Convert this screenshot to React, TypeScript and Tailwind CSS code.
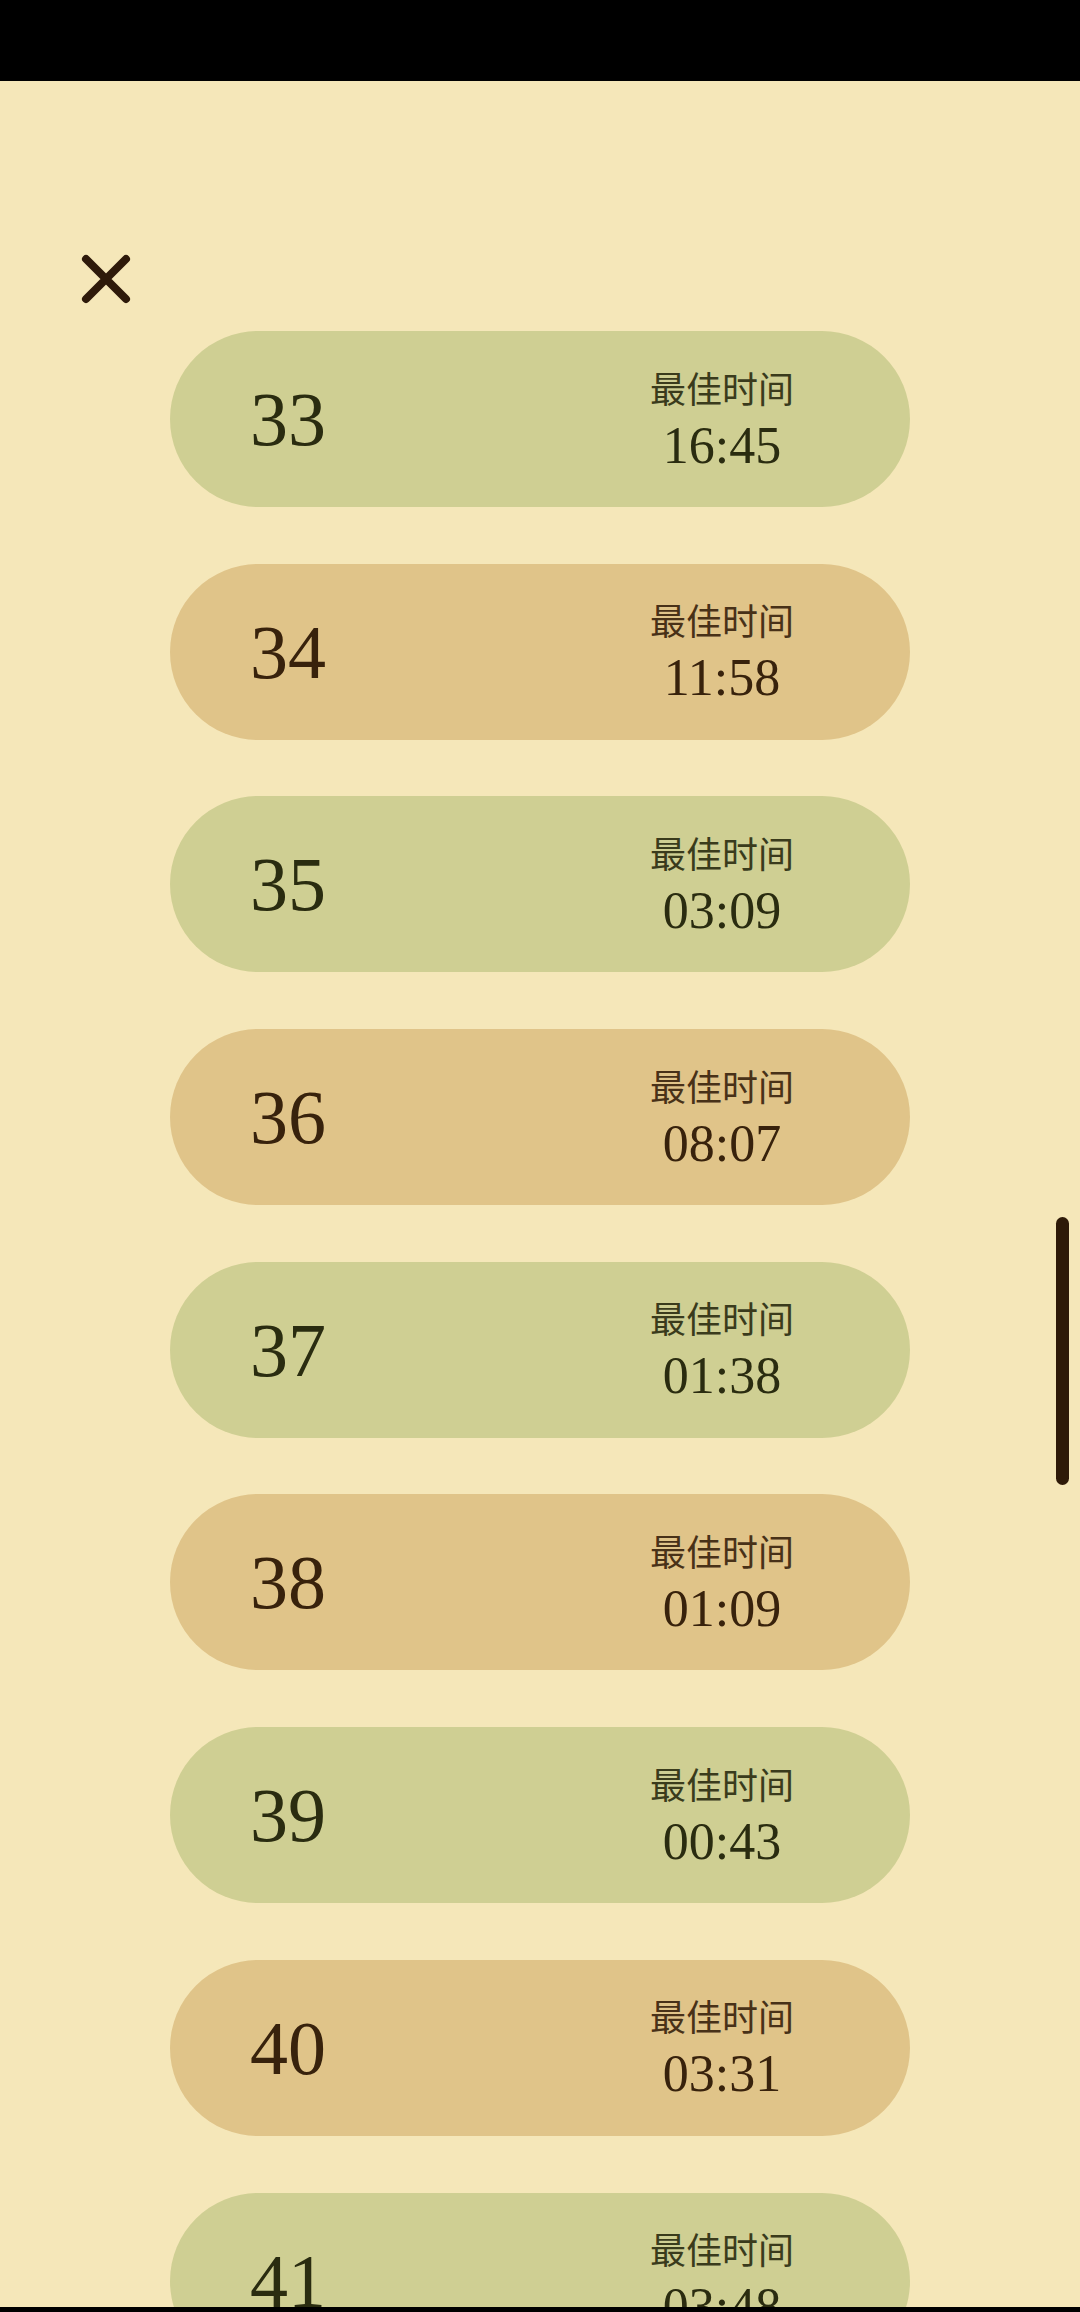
import React from "react";

type Level = { id: number; best: string };

const levels: Level[] = [
  { id: 33, best: "16:45" },
  { id: 34, best: "11:58" },
  { id: 35, best: "03:09" },
  { id: 36, best: "08:07" },
  { id: 37, best: "01:38" },
  { id: 38, best: "01:09" },
  { id: 39, best: "00:43" },
  { id: 40, best: "03:31" },
  { id: 41, best: "03:48" },
];

function LevelPill({ level, index }: { level: Level; index: number }) {
  const green = index % 2 === 0;
  return (
    <div
      className={
        green
          ? "flex h-[176px] w-[740px] shrink-0 items-center justify-between rounded-full bg-[#cfcf93] pl-[80px] pr-[88px] text-[#2a2c10]"
          : "flex h-[176px] w-[740px] shrink-0 items-center justify-between rounded-full bg-[#e0c489] pl-[80px] pr-[88px] text-[#38220c]"
      }
    >
      <span className="text-[76px] leading-none [font-family:'Liberation_Serif',serif]">
        {level.id}
      </span>
      <div className="flex w-[200px] flex-col items-center">
        <span className="text-[36px] leading-[44px] opacity-90 [font-family:'Noto_Sans_CJK_SC',sans-serif]">
          最佳时间
        </span>
        <span className="mt-[9px] text-[52px] leading-[56px] [font-family:'Liberation_Serif',serif]">
          {level.best}
        </span>
      </div>
    </div>
  );
}

export default function App() {
  return (
    <div className="flex h-[2312px] w-[1080px] flex-col overflow-hidden bg-[#f5e7b9]">
      {/* status bar */}
      <div className="h-[81px] shrink-0 bg-black" />

      <div className="relative min-h-0 flex-1 overflow-hidden">
        {/* close */}
        <button className="ml-[81px] mt-[173px] block h-[50px] w-[50px]">
          <svg viewBox="0 0 50 50" className="h-[50px] w-[50px]">
            <path
              d="M5 5 L45 45 M45 5 L5 45"
              stroke="#2e1a0a"
              strokeWidth="8"
              strokeLinecap="round"
              fill="none"
            />
          </svg>
        </button>

        {/* level list */}
        <div className="mt-[27px] flex flex-col items-start gap-[56.7px] pl-[170px]">
          {levels.map((l, i) => (
            <LevelPill key={l.id} level={l} index={i} />
          ))}
        </div>

        {/* scrollbar */}
        <div className="absolute left-[1056px] top-[1136px] h-[268px] w-[13px] rounded-full bg-[#2e1a08]" />
      </div>

      <div className="h-[5px] shrink-0 bg-black" />
    </div>
  );
}
